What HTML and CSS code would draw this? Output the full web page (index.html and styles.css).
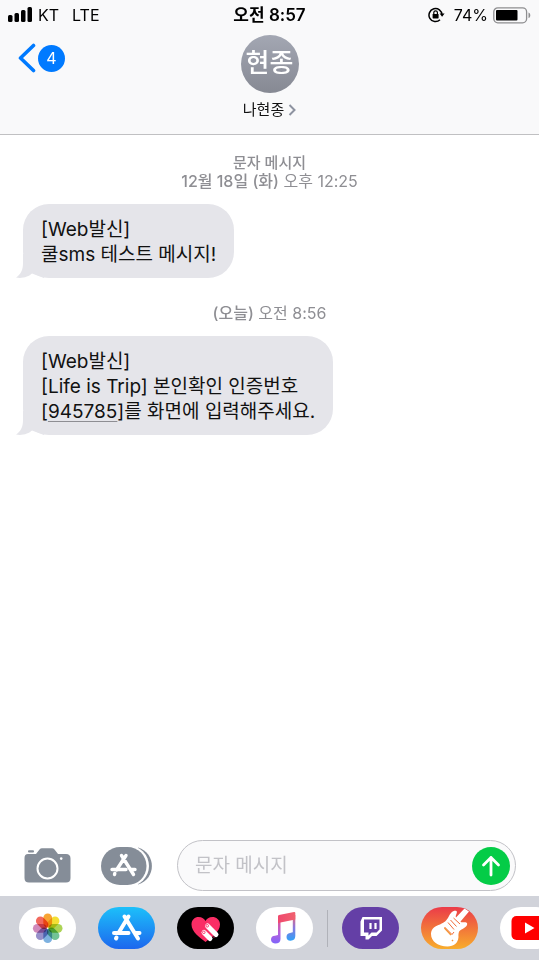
FILE: index.html
```html
<!DOCTYPE html>
<html lang="ko">
<head>
<meta charset="utf-8">
<meta name="viewport" content="width=device-width, initial-scale=1">
<title>나현종</title>
<link rel="stylesheet" href="styles.css">
</head>
<body>
<div class="app">
  <header class="top">
    <div class="status">
      <div class="status-left">
        <svg class="signal" viewBox="0 0 25 16" aria-hidden="true">
          <rect x="0" y="8" width="4.500" height="7" rx="1.500"/>
          <rect x="6.500" y="6" width="4.500" height="9" rx="1.500"/>
          <rect x="13" y="3" width="4.500" height="12" rx="1.500"/>
          <rect x="19.500" y="0" width="4.500" height="15" rx="1.500"/>
        </svg>
        <span>KT</span>
        <span class="network">LTE</span>
      </div>
      <time class="clock">오전 8:57</time>
      <div class="status-right">
        <svg class="rotation" viewBox="0 0 17 16" aria-hidden="true">
          <path d="M14 8A6.500 6.500 0 1 0 12 12.800" fill="none" stroke="#000" stroke-width="1.500"/>
          <path d="M11.600 6.600h5l-2.500 3.200z"/>
          <rect x="4.600" y="7" width="6" height="4.400" rx=".6"/>
          <path d="M5.800 7.300V5.600a1.800 1.800 0 0 1 3.600 0v1.700" fill="none" stroke="#000" stroke-width="1.200"/>
        </svg>
        <span>74%</span>
        <svg class="battery" viewBox="0 0 38 17" aria-hidden="true">
          <rect x=".8" y=".8" width="32.800" height="15" rx="4" fill="none" stroke="#8e8e90" stroke-width="1.300"/>
          <rect x="3" y="3" width="21.500" height="10.600" rx="1"/>
          <path d="M35.500 5.500c2.400.8 2.400 4.800 0 5.600z" fill="#8e8e90"/>
        </svg>
      </div>
    </div>
    <nav class="nav">
      <button class="back" type="button" aria-label="뒤로">
        <svg class="back-arrow" viewBox="0 0 18 30" aria-hidden="true"><path d="M15.500 2.500 2.500 15l13 12.500" fill="none" stroke="#007aff" stroke-width="3.600" stroke-linecap="round" stroke-linejoin="round"/></svg>
        <span class="unread">4</span>
      </button>
      <button class="contact" type="button">
        <span class="avatar">현종</span>
        <span class="contact-name">나현종
          <svg class="disclosure" viewBox="0 0 8 12" aria-hidden="true"><path d="M1.500 1 6.500 6l-5 5" fill="none" stroke="#8e93a0" stroke-width="2"/></svg>
        </span>
      </button>
    </nav>
  </header>

  <main class="thread">
    <div class="stamp">
      <b class="service">문자 메시지</b>
      <span><b>12월 18일 (화)</b> 오후 12:25</span>
    </div>
    <div class="bubble">
      [Web발신]<br>쿨sms 테스트 메시지!
      <svg class="tail" viewBox="0 0 28 24" aria-hidden="true"><path d="M7 0V9C7 16 5 20 0 23.500C6 25 13 22.500 16 19.500L28 24V0z"/></svg>
    </div>
    <div class="stamp"><span><b>(오늘)</b> 오전 8:56</span></div>
    <div class="bubble">
      [Web발신]<br>[Life is Trip] 본인확인 인증번호<br>[<a class="code" href="#code">945785</a>]를 화면에 입력해주세요.
      <svg class="tail" viewBox="0 0 28 24" aria-hidden="true"><path d="M7 0V9C7 16 5 20 0 23.500C6 25 13 22.500 16 19.500L28 24V0z"/></svg>
    </div>
  </main>

  <form class="composer">
    <button class="tool" type="button" aria-label="카메라">
      <svg class="camera" viewBox="0 0 47 35" aria-hidden="true">
        <path d="M4 6H12L15.500 1.500Q16.500.2 18 .2H28Q29.500.2 30.500 1.500L34 6H42Q46.500 6 46.500 10.500V30Q46.500 34.500 42 34.500H5Q.5 34.500.5 30V10Q.5 6 4 6z" fill="#858d98"/>
        <rect x="4" y="2.200" width="6" height="2.200" rx="1" fill="#858d98"/>
        <circle cx="23.500" cy="20.500" r="10" fill="none" stroke="#fff" stroke-width="2"/>
        <circle cx="37.200" cy="10.600" r="1.300" fill="#fff"/>
      </svg>
    </button>
    <button class="tool" type="button" aria-label="앱">
      <svg class="apps" viewBox="0 0 51 38" aria-hidden="true">
        <path d="M37 .5C55.500 6 55.500 32 37 37.500z" fill="#858d98"/>
        <rect x="-1.500" y="-1.500" width="49.500" height="41" rx="20.500" fill="#fff"/>
        <rect x="0" y="0" width="45.500" height="38" rx="19" fill="#858d98"/>
        <g fill="none" stroke="#fff" stroke-width="3.400" stroke-linecap="round">
          <path d="M20.500 8.500 32.500 27.500M25 8.500 15.500 23M13.800 26.500 13.500 27.500M11 22.500H25M30.500 22.500H34"/>
        </g>
      </svg>
    </button>
    <div class="field">
      <input class="field-input" type="text" aria-label="문자 메시지" placeholder="문자 메시지">
      <button class="send" type="button" aria-label="보내기">
        <svg class="send-arrow" viewBox="0 0 20 22" aria-hidden="true"><path d="M10 20V2.500M2.500 10 10 2.500 17.500 10" fill="none" stroke="#fff" stroke-width="2.800" stroke-linecap="round" stroke-linejoin="round"/></svg>
      </button>
    </div>
  </form>

  <div class="drawer">
    <button class="app-icon" type="button" aria-label="사진">
      <svg viewBox="0 0 57 42" aria-hidden="true">
        <rect width="57" height="42" rx="21" fill="#fff"/>
        <g class="petals">
          <rect x="24.300" y="6.500" width="8.800" height="14" rx="4.400" fill="#f79a1e"/>
          <rect x="24.300" y="6.500" width="8.800" height="14" rx="4.400" fill="#f2dc1f" transform="rotate(45 28.700 21.300)"/>
          <rect x="24.300" y="6.500" width="8.800" height="14" rx="4.400" fill="#a3cf42" transform="rotate(90 28.700 21.300)"/>
          <rect x="24.300" y="6.500" width="8.800" height="14" rx="4.400" fill="#63bd8b" transform="rotate(135 28.700 21.300)"/>
          <rect x="24.300" y="6.500" width="8.800" height="14" rx="4.400" fill="#6fa9dc" transform="rotate(180 28.700 21.300)"/>
          <rect x="24.300" y="6.500" width="8.800" height="14" rx="4.400" fill="#8c84c4" transform="rotate(225 28.700 21.300)"/>
          <rect x="24.300" y="6.500" width="8.800" height="14" rx="4.400" fill="#cb7db4" transform="rotate(270 28.700 21.300)"/>
          <rect x="24.300" y="6.500" width="8.800" height="14" rx="4.400" fill="#f0584c" transform="rotate(315 28.700 21.300)"/>
        </g>
      </svg>
    </button>
    <button class="app-icon" type="button" aria-label="App Store">
      <svg viewBox="0 0 57 42" aria-hidden="true">
        <defs><linearGradient id="store" x1="0" y1="0" x2="0" y2="1"><stop offset="0" stop-color="#1cc0fa"/><stop offset="1" stop-color="#1d67ee"/></linearGradient></defs>
        <rect width="57" height="42" rx="21" fill="url(#store)"/>
        <g fill="none" stroke="#fff" stroke-width="4" stroke-linecap="round">
          <path d="M26.500 9.500 40 31.500M30.500 9.500 20.500 26M18.500 30.500 18 31.500M16 26H30.500M37.500 26H41.500"/>
        </g>
      </svg>
    </button>
    <button class="app-icon" type="button" aria-label="Digital Touch">
      <svg viewBox="0 0 57 42" aria-hidden="true">
        <rect width="57" height="42" rx="21" fill="#000"/>
        <path d="M28.500 35C23 30.500 14.500 25 14.500 17.500C14.500 12.500 18 10 21.500 10C25 10 27.500 12 28.500 14C29.500 12 32 10 35.500 10C39 10 43 12.500 43 17.500C43 25 34 30.500 28.500 35z" fill="#fa2d65"/>
        <g stroke="#fff" stroke-width="5" stroke-linecap="round">
          <path d="M30.500 19 39 27.500M27 25.500 33 31.500"/>
        </g>
        <path d="M29.400 22.800 37.500 31" stroke="#fa2d65" stroke-width=".8"/>
        <circle cx="30.200" cy="18.800" r="1.300" fill="none" stroke="#fa2d65" stroke-width=".9"/>
        <circle cx="26.800" cy="25.300" r="1.300" fill="none" stroke="#fa2d65" stroke-width=".9"/>
      </svg>
    </button>
    <button class="app-icon" type="button" aria-label="음악">
      <svg viewBox="0 0 57 42" aria-hidden="true">
        <defs>
          <linearGradient id="beam" x1="0" y1="0" x2="1" y2="0"><stop offset="0" stop-color="#f0486e"/><stop offset="1" stop-color="#f0626f"/></linearGradient>
          <linearGradient id="stemLeft" x1="0" y1="0" x2="0" y2="1"><stop offset="0" stop-color="#ef4d74"/><stop offset=".6" stop-color="#b661dc"/><stop offset="1" stop-color="#8065fb"/></linearGradient>
          <linearGradient id="stemRight" x1="0" y1="0" x2="0" y2="1"><stop offset="0" stop-color="#f1636f"/><stop offset=".5" stop-color="#8878df"/><stop offset="1" stop-color="#2fa2f8"/></linearGradient>
        </defs>
        <rect width="57" height="42" rx="21" fill="#fff"/>
        <path d="M22 9.500 24.500 9V32Q24.500 36.500 19 36.500Q15 36 15 32.500Q15 29 19 28.700L22 28z" fill="url(#stemLeft)"/>
        <path d="M36.800 8H39.300V29Q39.300 33.500 34.500 33.700Q30.500 33.500 30.500 30Q30.500 26.500 34 26L36.800 25.300z" fill="url(#stemRight)"/>
        <path d="M22 9.200Q22 8.200 23 8L38 5.100Q39.300 4.900 39.300 6V12.500L22 15.900z" fill="url(#beam)"/>
      </svg>
    </button>
    <span class="divider"></span>
    <button class="app-icon" type="button" aria-label="Twitch">
      <svg viewBox="0 0 57 42" aria-hidden="true">
        <rect width="57" height="42" rx="21" fill="#643fa6"/>
        <path d="M20.500 10H40V23.500L34.500 29H30L26.500 32.500H23.500V29H18.500V14.500z" fill="#fff"/>
        <path d="M22 12.500H37.500V22.500L34.500 25.500H29.500L26.500 28.500V25.500H22z" fill="#643fa6"/>
        <path d="M28.500 16V22M33.500 16V22" stroke="#fff" stroke-width="2.200"/>
      </svg>
    </button>
    <button class="app-icon" type="button" aria-label="GarageBand">
      <svg viewBox="0 0 57 42" aria-hidden="true">
        <defs>
          <linearGradient id="band" x1="0" y1="0" x2="0" y2="1"><stop offset="0" stop-color="#eb3b49"/><stop offset="1" stop-color="#f8ad2c"/></linearGradient>
          <clipPath id="bandShape"><rect width="57" height="42" rx="21"/></clipPath>
        </defs>
        <g clip-path="url(#bandShape)">
          <rect width="57" height="42" fill="url(#band)"/>
          <path d="M10 27C10 21 15 19 19 17.500C24 15 25.500 13.500 27.500 10C29.500 6 32 3 35.500 4C37 5.500 34 8.500 35 10.500L43.500 1.500L48 4.500L39.500 14.500C41 16.500 44.500 14 46 16C47 19 43.500 21 40.500 22.500C37 24 37.500 27.500 37.500 30C37 36 33 39.500 26.500 39.500C17 39.500 10 34.500 10 27z" fill="#fff"/>
          <g fill="none" stroke="#f06a39" stroke-width="1">
            <path d="M27 15.500 33 22.500M29.500 13 35.500 19.500M32.500 11 39 17M23.500 20 31 27.500 33 25"/>
          </g>
          <path d="M23.500 21 30 28M31 33 32 34" stroke="#f5963a" stroke-width="1.500"/>
        </g>
      </svg>
    </button>
    <button class="app-icon" type="button" aria-label="YouTube">
      <svg viewBox="0 0 57 42" aria-hidden="true">
        <rect width="57" height="42" rx="21" fill="#fff"/>
        <rect x="11.500" y="9" width="34" height="24" rx="5" fill="#f00"/>
        <path d="M25 15.500V26.500L34.500 21z" fill="#fff"/>
      </svg>
    </button>
  </div>
</div>
</body>
</html>
```
FILE: styles.css
```css
* { box-sizing: border-box; }

body {
  margin: 0;
  background: #fff;
  color: #111;
  font-family: Inter, "Noto Sans CJK KR", sans-serif;
}

button {
  padding: 0;
  border: 0;
  background: none;
  color: inherit;
  font: inherit;
}

svg { display: block; }

.app {
  display: flex;
  flex-direction: column;
  min-height: 100vh;
  overflow: hidden;
}

.top {
  padding-bottom: 14px;
  border-bottom: 1px solid #c0c0c2;
  background: #f9f9fa;
}

.status {
  display: grid;
  grid-template-columns: 1fr auto 1fr;
  align-items: center;
  height: 30px;
  padding: 0 8px;
  color: #000;
  font-size: 16px;
  line-height: 20px;
}

.status-left,
.status-right {
  display: flex;
  align-items: center;
  gap: 5px;
}

.status-right { justify-content: flex-end; }
.signal { width: 25px; height: 16px; }
.network { margin-left: 8px; }

.clock {
  font-size: 17px;
  font-weight: 600;
}

.rotation { width: 17px; height: 16px; margin-right: 4px; }
.battery { width: 38px; height: 17px; }

.nav {
  display: grid;
  grid-template-columns: 1fr auto 1fr;
  align-items: start;
  padding: 5px 18px 0;
}

.back {
  display: flex;
  align-items: center;
  justify-self: start;
  gap: 2px;
  margin-top: 8px;
}

.back-arrow { width: 18px; height: 30px; }

.unread {
  width: 27px;
  height: 27px;
  border-radius: 50%;
  background: #007aff;
  color: #fff;
  font-size: 16px;
  line-height: 27px;
  text-align: center;
}

.contact {
  display: flex;
  flex-direction: column;
  align-items: center;
  gap: 7px;
}

.avatar {
  width: 58px;
  height: 58px;
  border-radius: 50%;
  background: linear-gradient(#a3a7b3, #868993);
  color: #fff;
  font-size: 26px;
  font-weight: 500;
  line-height: 56px;
  text-align: center;
}

.contact-name {
  display: flex;
  align-items: center;
  gap: 4px;
  font-size: 15px;
  line-height: 20px;
}

.disclosure { width: 8px; height: 12px; }

.thread {
  display: flex;
  flex: 1;
  flex-direction: column;
  align-items: flex-start;
  padding: 18px 23px;
}

.stamp {
  display: flex;
  flex-direction: column;
  align-items: center;
  align-self: center;
  margin-bottom: 13px;
  color: #8e8e93;
  font-size: 16px;
  line-height: 19px;
}

.stamp b { font-weight: 500; }
.stamp .service { font-size: 15px; }

.bubble {
  position: relative;
  margin-bottom: 26px;
  padding: 13px 18px 11px;
  border-radius: 26px;
  background: #e5e5ea;
  font-size: 19px;
  line-height: 25px;
}

.tail {
  position: absolute;
  bottom: 0;
  left: -7px;
  z-index: -1;
  width: 28px;
  height: 24px;
  fill: #e5e5ea;
}

.code {
  color: inherit;
  text-decoration: underline;
  text-decoration-color: #8e8e93;
  text-decoration-thickness: 1px;
  text-underline-offset: 3px;
}

.composer {
  display: flex;
  align-items: center;
  gap: 30px;
  padding: 0 23px 5px 24px;
}

.camera { width: 47px; height: 35px; }
.apps { width: 51px; height: 38px; }

.field {
  display: flex;
  flex: 1;
  align-items: center;
  min-width: 0;
  height: 51px;
  margin-left: -5px;
  padding: 0 5px 0 17px;
  border: 1px solid #c2c2c7;
  border-radius: 26px;
  background: #fafafb;
}

.field-input {
  flex: 1;
  min-width: 0;
  padding: 0;
  border: 0;
  outline: 0;
  background: none;
  font: inherit;
  font-size: 19px;
}

.field-input::placeholder { color: #c2c2c7; }

.send {
  display: grid;
  flex: none;
  place-items: center;
  width: 38px;
  height: 38px;
  border-radius: 50%;
  background: #04cc47;
}

.send-arrow { width: 20px; height: 22px; }

.drawer {
  display: flex;
  align-items: center;
  gap: 22px;
  height: 64px;
  padding-left: 19px;
  overflow: hidden;
  background: #d1d3da;
}

.app-icon { flex: none; }

.app-icon svg { width: 57px; height: 42px; }

.petals rect { mix-blend-mode: multiply; opacity: 0.9; }

.divider {
  flex: none;
  width: 1px;
  height: 37px;
  margin: 0 -8px;
  background: #b0b2b9;
}
```
